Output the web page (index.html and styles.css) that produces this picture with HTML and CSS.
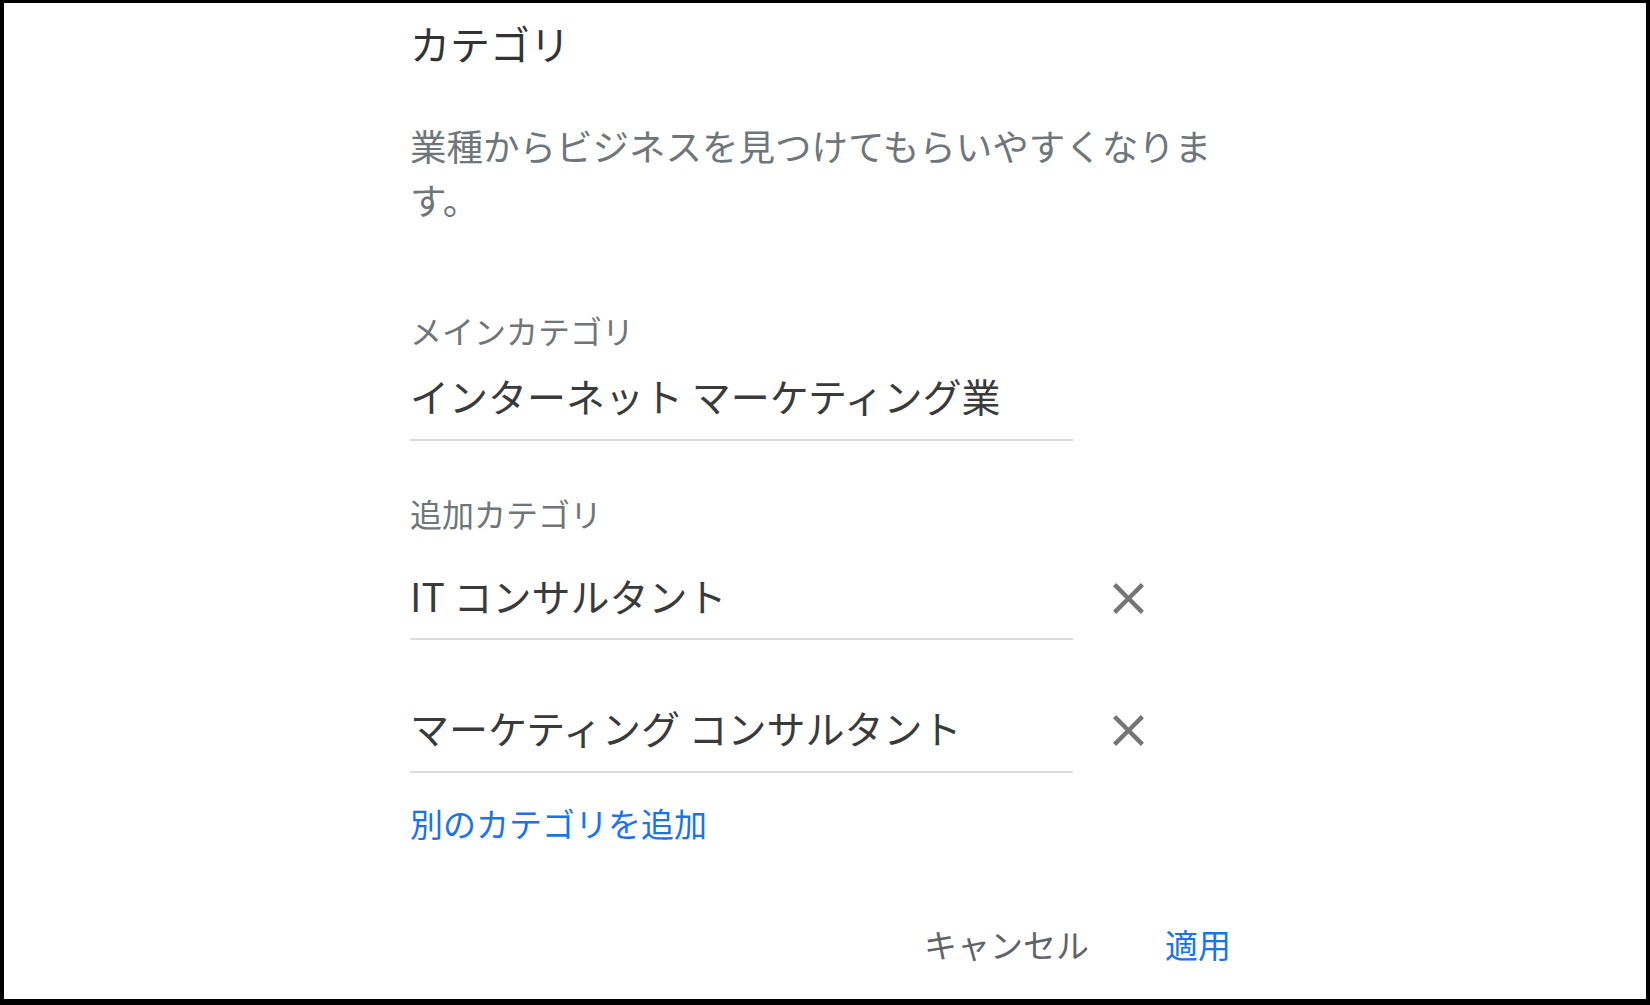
FILE: index.html
```html
<!DOCTYPE html>
<html lang="ja">
<head>
  <meta charset="UTF-8">
  <meta name="viewport" content="width=device-width, initial-scale=1.0">
  <title>カテゴリ</title>
  <link rel="stylesheet" href="styles.css">
</head>
<body>
  <div class="dialog">
    <div class="content">
      <div class="title">カテゴリ</div>
      <p class="description">業種からビジネスを見つけてもらいやすくなります。</p>

      <div class="label label-main">メインカテゴリ</div>
      <div class="field field-main">
        <div class="field-input">インターネット マーケティング業</div>
      </div>

      <div class="label label-extra">追加カテゴリ</div>
      <div class="field field-extra">
        <div class="field-input">IT コンサルタント</div>
        <button class="remove-btn" aria-label="削除">
          <svg viewBox="0 0 24 24" width="53" height="53"><path d="M19 6.41L17.59 5 12 10.59 6.41 5 5 6.41 10.59 12 5 17.59 6.41 19 12 13.41 17.59 19 19 17.59 13.41 12z"/></svg>
        </button>
      </div>
      <div class="field field-extra field-last">
        <div class="field-input">マーケティング コンサルタント</div>
        <button class="remove-btn" aria-label="削除">
          <svg viewBox="0 0 24 24" width="53" height="53"><path d="M19 6.41L17.59 5 12 10.59 6.41 5 5 6.41 10.59 12 5 17.59 6.41 19 12 13.41 17.59 19 19 17.59 13.41 12z"/></svg>
        </button>
      </div>

      <a class="add-link" href="#">別のカテゴリを追加</a>

      <div class="actions">
        <button class="btn btn-cancel">キャンセル</button>
        <button class="btn btn-apply">適用</button>
      </div>
    </div>
  </div>
</body>
</html>
```

FILE: styles.css
```css
/* Category edit dialog */
html, body {
  margin: 0;
}
body {
  background-color: #000;
  padding: 3px 4px 6px;
  font-family: "Noto Sans CJK JP", "Noto Sans", sans-serif;
}
.dialog {
  background-color: #fff;
  height: 996px;
  padding-top: 12px;
  box-sizing: border-box;
}
.content {
  width: 830px;
  margin: 0 auto;
}
.title {
  font-size: 40px;
  line-height: 56px;
  color: #333;
}
.description {
  margin: 48px 0 0;
  font-size: 36.5px;
  line-height: 54px;
  color: #70757a;
}
.label {
  font-size: 32px;
  line-height: 44px;
  color: #70757a;
}
.label-main {
  margin-top: 81px;
}
.label-extra {
  margin-top: 50px;
}
.field {
  display: flex;
  align-items: flex-start;
}
.field-input {
  width: 663px;
  font-size: 39px;
  line-height: 56px;
  color: #3a3a3a;
  border-bottom: 2px solid #dadce0;
}
.field-main {
  margin-top: 15px;
}
.field-main .field-input {
  padding-bottom: 16px;
}
.field-extra {
  margin-top: 32px;
}
.field-extra .field-input {
  padding-bottom: 15px;
}
.field-last {
  margin-top: 59px;
}
.field-last .field-input {
  padding-bottom: 16px;
}
.remove-btn {
  margin: 5px 0 0 29px;
  padding: 0;
  border: none;
  background: none;
  width: 53px;
  height: 53px;
  cursor: pointer;
  fill: #757575;
}
.remove-btn svg {
  display: block;
}
.add-link {
  display: block;
  margin-top: 28px;
  font-size: 33px;
  line-height: 44px;
  color: #1a73e8;
  text-decoration: none;
}
.actions {
  display: flex;
  justify-content: flex-end;
  gap: 76px;
  margin-top: 77px;
  padding-right: 9px;
}
.btn {
  padding: 0;
  border: none;
  background: none;
  font-family: inherit;
  font-size: 33px;
  line-height: 44px;
  cursor: pointer;
}
.btn-cancel {
  color: #5f6368;
}
.btn-apply {
  color: #1a73e8;
}
```
